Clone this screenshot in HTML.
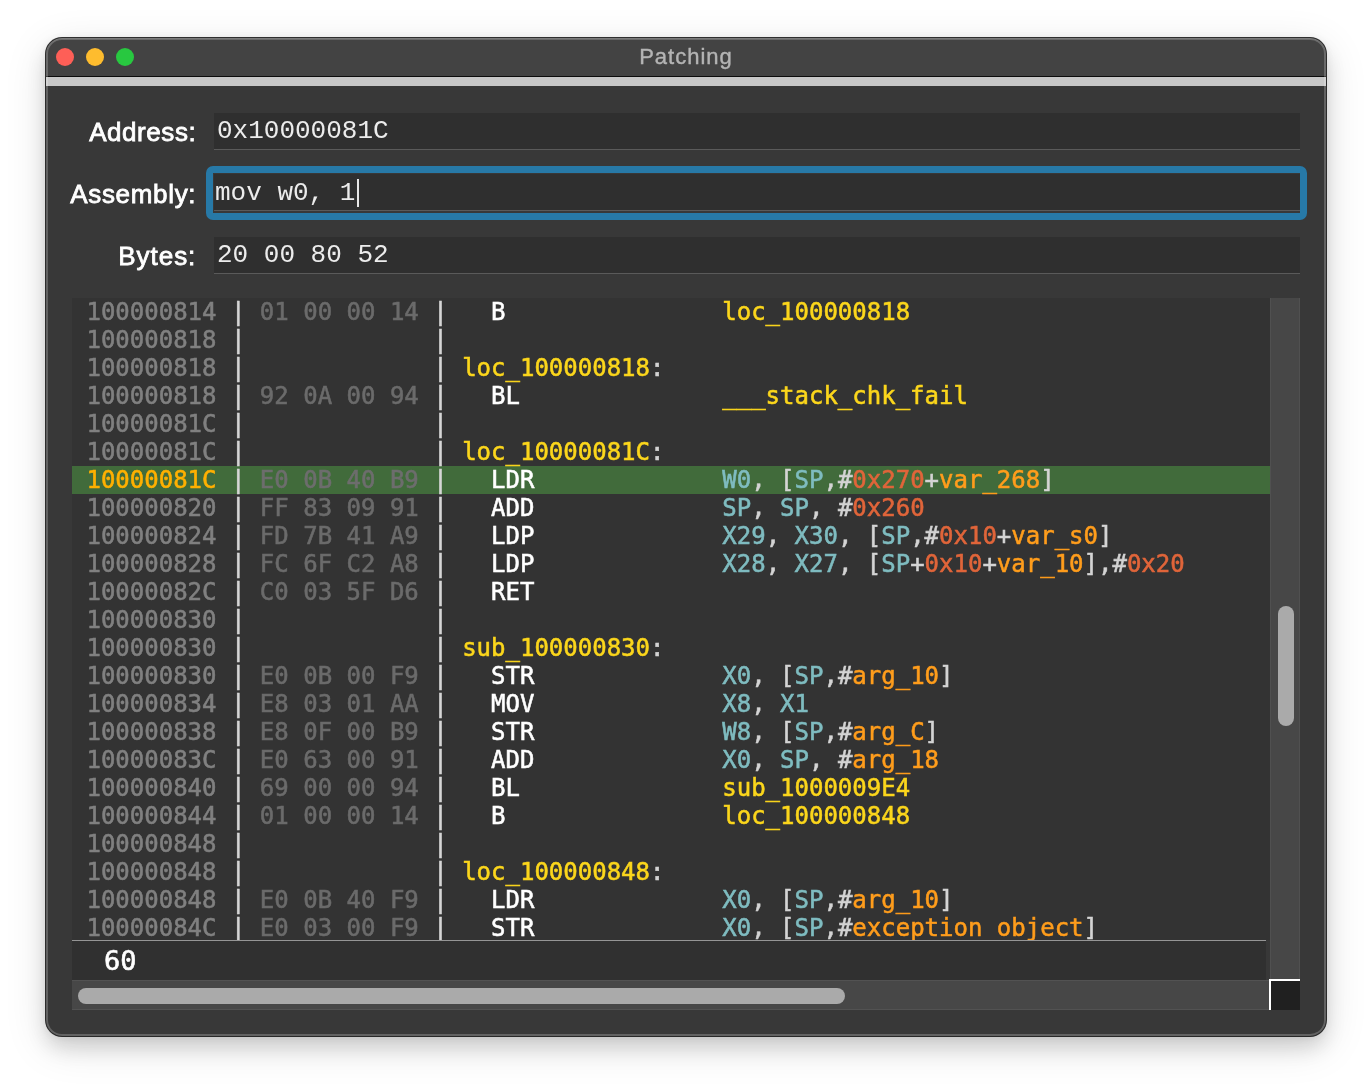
<!DOCTYPE html>
<html>
<head>
<meta charset="utf-8">
<title>Patching</title>
<style>
html,body{margin:0;padding:0;}
body{width:1372px;height:1090px;background:#ffffff;position:relative;overflow:hidden;font-family:"Liberation Sans",sans-serif;}
#win{position:absolute;left:46px;top:38px;width:1280px;height:998px;background:#383838;border-radius:16px;box-shadow:0 0 0 1px rgba(0,0,0,0.8),0 12px 20px rgba(0,0,0,0.13),0 10px 44px rgba(0,0,0,0.12),0 1px 8px rgba(0,0,0,0.07);overflow:hidden;}
#in{position:absolute;left:0;top:-1px;width:1280px;height:999px;}
#win:after{content:"";position:absolute;left:0;top:0;right:0;bottom:0;border-radius:16px;box-shadow:inset 0 0 0 2px rgba(255,255,255,0.21),inset 0 1px 0 0 rgba(255,255,255,0.12);pointer-events:none;}
#tb{position:absolute;left:0;top:0;width:1280px;height:39px;background:#434343;border-bottom:1px solid #0c0c0c;}
#title{position:absolute;left:0;top:1px;width:1280px;height:38px;line-height:38px;-webkit-text-stroke:0.4px;text-align:center;color:#b4b4b4;font-size:22px;letter-spacing:1px;}
.tl{position:absolute;top:11px;width:18px;height:18px;border-radius:50%;}
#strip{position:absolute;left:0;top:40px;width:1280px;height:9px;background:#c8c8c8;}
.txt{will-change:transform;}
.lbl{position:absolute;left:0;width:150.3px;text-align:right;color:#ffffff;font-size:26px;height:40px;line-height:40px;-webkit-text-stroke:0.8px #fff;}
.inp{position:absolute;left:168px;width:1086px;height:36px;background:#2f2f2f;border-bottom:1px solid #5a5a5a;}
.it{position:absolute;left:171px;height:36px;color:#ececec;font-family:"Liberation Mono",monospace;font-size:26px;line-height:37px;white-space:pre;}
#ring{position:absolute;left:160px;top:129px;width:1087px;height:40px;border:7.5px solid #2779a7;border-radius:7px;}
#caret{position:absolute;left:311px;top:142px;width:2px;height:28px;background:#e8e8e8;}
#codebg{position:absolute;left:26px;top:261px;width:1198px;height:642px;background:#333333;}
#hl{position:absolute;left:26px;top:429px;width:1198px;height:28px;background:#416b3b;}
#code{position:absolute;left:25.5px;top:261px;width:1199px;height:642px;overflow:hidden;font-family:"DejaVu Sans Mono",monospace;font-size:24px;-webkit-text-stroke:0.55px;}
.row{height:28px;line-height:28px;white-space:pre;}
.a{color:#808080}.b{color:#6b6b6b}.s{color:#d6d6d6}.m{color:#ffffff}.y{color:#fbd61c}.p{color:#d4d4d4}.r{color:#7fbcc0}.n{color:#e0653a}.v{color:#ff9d1c}
.ah{color:#ffb000}.bh{color:#6d6d6d}
#vsb{position:absolute;left:1224px;top:261px;width:28px;height:682px;background:#474747;border-left:1px solid #505050;border-right:1px solid #505050;}
#vth{position:absolute;left:1232px;top:569px;width:16px;height:120px;border-radius:8px;background:#aaaaaa;}
#line{position:absolute;left:26px;top:903px;width:1194px;height:1px;background:#959595;}
#stat{position:absolute;left:26px;top:904px;width:1194px;height:39px;background:#303030;}
#stt{position:absolute;left:57.5px;top:904px;height:39px;color:#fff;font-family:"DejaVu Sans Mono",monospace;font-size:27px;line-height:39px;white-space:pre;-webkit-text-stroke:0.6px;}
#hsb{position:absolute;left:26px;top:943px;width:1198px;height:28px;background:#474747;border-top:1px solid #525252;border-bottom:1px solid #525252;}
#hth{position:absolute;left:32px;top:951px;width:767px;height:16px;border-radius:8px;background:#aaaaaa;}
#corner{position:absolute;left:1223px;top:942px;width:29px;height:29px;background:#202020;border-left:2px solid #fff;border-top:2px solid #fff;}
</style>
</head>
<body>
<div id="win"><div id="in">
  <div id="tb"></div>
  <div id="title" class="txt">Patching</div>
  <div class="tl" style="left:10px;background:#fe5f57"></div>
  <div class="tl" style="left:40px;background:#febc2e"></div>
  <div class="tl" style="left:70px;background:#28c840"></div>
  <div id="strip"></div>

  <div class="inp" style="top:76px"></div>
  <div class="inp" style="top:137px"></div>
  <div class="inp" style="top:200px"></div>
  <div id="ring"></div>
  <div class="lbl txt" style="top:75px;letter-spacing:0.57px">Address:</div>
  <div class="it txt" style="top:76px">0x10000081C</div>
  <div class="lbl txt" style="top:137px;letter-spacing:0.69px">Assembly:</div>
  <div class="it txt" style="top:138px;left:169px">mov w0, 1</div>
  <div id="caret"></div>
  <div class="lbl txt" style="top:199px;letter-spacing:0.96px">Bytes:</div>
  <div class="it txt" style="top:200px">20 00 80 52</div>

  <div id="codebg"></div>
  <div id="hl"></div>
  <div id="code" class="txt">
<div class="row"> <span class="a">100000814</span> <span class="s">|</span> <span class="b">01 00 00 14</span> <span class="s">|</span>   <span class="m">B               </span><span class="y">loc_100000818</span></div>
<div class="row"> <span class="a">100000818</span> <span class="s">|</span> <span class="b">           </span> <span class="s">|</span></div>
<div class="row"> <span class="a">100000818</span> <span class="s">|</span> <span class="b">           </span> <span class="s">|</span> <span class="y">loc_100000818</span><span class="p">:</span></div>
<div class="row"> <span class="a">100000818</span> <span class="s">|</span> <span class="b">92 0A 00 94</span> <span class="s">|</span>   <span class="m">BL              </span><span class="y">___stack_chk_fail</span></div>
<div class="row"> <span class="a">10000081C</span> <span class="s">|</span> <span class="b">           </span> <span class="s">|</span></div>
<div class="row"> <span class="a">10000081C</span> <span class="s">|</span> <span class="b">           </span> <span class="s">|</span> <span class="y">loc_10000081C</span><span class="p">:</span></div>
<div class="row"> <span class="ah">10000081C</span> <span class="s">|</span> <span class="bh">E0 0B 40 B9</span> <span class="s">|</span>   <span class="m">LDR             </span><span class="r">W0</span><span class="p">, [</span><span class="r">SP</span><span class="p">,#</span><span class="n">0x270</span><span class="p">+</span><span class="v">var_268</span><span class="p">]</span></div>
<div class="row"> <span class="a">100000820</span> <span class="s">|</span> <span class="b">FF 83 09 91</span> <span class="s">|</span>   <span class="m">ADD             </span><span class="r">SP</span><span class="p">, </span><span class="r">SP</span><span class="p">, #</span><span class="n">0x260</span></div>
<div class="row"> <span class="a">100000824</span> <span class="s">|</span> <span class="b">FD 7B 41 A9</span> <span class="s">|</span>   <span class="m">LDP             </span><span class="r">X29</span><span class="p">, </span><span class="r">X30</span><span class="p">, [</span><span class="r">SP</span><span class="p">,#</span><span class="n">0x10</span><span class="p">+</span><span class="v">var_s0</span><span class="p">]</span></div>
<div class="row"> <span class="a">100000828</span> <span class="s">|</span> <span class="b">FC 6F C2 A8</span> <span class="s">|</span>   <span class="m">LDP             </span><span class="r">X28</span><span class="p">, </span><span class="r">X27</span><span class="p">, [</span><span class="r">SP</span><span class="p">+</span><span class="n">0x10</span><span class="p">+</span><span class="v">var_10</span><span class="p">],#</span><span class="n">0x20</span></div>
<div class="row"> <span class="a">10000082C</span> <span class="s">|</span> <span class="b">C0 03 5F D6</span> <span class="s">|</span>   <span class="m">RET             </span></div>
<div class="row"> <span class="a">100000830</span> <span class="s">|</span> <span class="b">           </span> <span class="s">|</span></div>
<div class="row"> <span class="a">100000830</span> <span class="s">|</span> <span class="b">           </span> <span class="s">|</span> <span class="y">sub_100000830</span><span class="p">:</span></div>
<div class="row"> <span class="a">100000830</span> <span class="s">|</span> <span class="b">E0 0B 00 F9</span> <span class="s">|</span>   <span class="m">STR             </span><span class="r">X0</span><span class="p">, [</span><span class="r">SP</span><span class="p">,#</span><span class="v">arg_10</span><span class="p">]</span></div>
<div class="row"> <span class="a">100000834</span> <span class="s">|</span> <span class="b">E8 03 01 AA</span> <span class="s">|</span>   <span class="m">MOV             </span><span class="r">X8</span><span class="p">, </span><span class="r">X1</span></div>
<div class="row"> <span class="a">100000838</span> <span class="s">|</span> <span class="b">E8 0F 00 B9</span> <span class="s">|</span>   <span class="m">STR             </span><span class="r">W8</span><span class="p">, [</span><span class="r">SP</span><span class="p">,#</span><span class="v">arg_C</span><span class="p">]</span></div>
<div class="row"> <span class="a">10000083C</span> <span class="s">|</span> <span class="b">E0 63 00 91</span> <span class="s">|</span>   <span class="m">ADD             </span><span class="r">X0</span><span class="p">, </span><span class="r">SP</span><span class="p">, #</span><span class="v">arg_18</span></div>
<div class="row"> <span class="a">100000840</span> <span class="s">|</span> <span class="b">69 00 00 94</span> <span class="s">|</span>   <span class="m">BL              </span><span class="y">sub_1000009E4</span></div>
<div class="row"> <span class="a">100000844</span> <span class="s">|</span> <span class="b">01 00 00 14</span> <span class="s">|</span>   <span class="m">B               </span><span class="y">loc_100000848</span></div>
<div class="row"> <span class="a">100000848</span> <span class="s">|</span> <span class="b">           </span> <span class="s">|</span></div>
<div class="row"> <span class="a">100000848</span> <span class="s">|</span> <span class="b">           </span> <span class="s">|</span> <span class="y">loc_100000848</span><span class="p">:</span></div>
<div class="row"> <span class="a">100000848</span> <span class="s">|</span> <span class="b">E0 0B 40 F9</span> <span class="s">|</span>   <span class="m">LDR             </span><span class="r">X0</span><span class="p">, [</span><span class="r">SP</span><span class="p">,#</span><span class="v">arg_10</span><span class="p">]</span></div>
<div class="row"> <span class="a">10000084C</span> <span class="s">|</span> <span class="b">E0 03 00 F9</span> <span class="s">|</span>   <span class="m">STR             </span><span class="r">X0</span><span class="p">, [</span><span class="r">SP</span><span class="p">,#</span><span class="v">exception_object</span><span class="p">]</span></div>
  </div>
  <div id="vsb"></div>
  <div id="vth"></div>
  <div id="line"></div>
  <div id="stat"></div>
  <div id="stt" class="txt">60</div>
  <div id="hsb"></div>
  <div id="hth"></div>
  <div id="corner"></div>
</div></div>
</body>
</html>
